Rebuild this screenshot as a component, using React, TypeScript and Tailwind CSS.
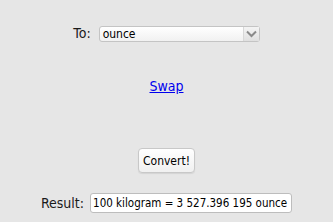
import React from "react";

export default function App() {
  return (
    <div className="w-[333px] h-[222px] bg-[#e6e6e6] flex flex-col items-center font-['DejaVu_Sans_Condensed','Open_Sans',sans-serif] text-[#1a1a1a] overflow-hidden">
      <div className="flex items-center gap-[8px] mt-[25px] h-[17px]">
        <span className="text-[14px] leading-[17px]">To:</span>
        <div className="w-[161px] h-[16px] flex items-stretch rounded-[3px] border border-[#c4c4c4] bg-gradient-to-b from-white to-[#f1f1f1]">
          <span className="flex-1 text-[12px] leading-[14px] pl-[3px] text-black">ounce</span>
          <div className="w-[16px] border-l border-[#d8d8d8] flex items-center justify-center bg-gradient-to-b from-[#f4f4f4] to-[#e0e0e0]">
            <svg width="11" height="8" viewBox="0 0 11 8">
              <path d="M1 1.5 L5.5 6 L10 1.5" fill="none" stroke="#8a8a8a" strokeWidth="2" />
            </svg>
          </div>
        </div>
      </div>
      <a href="#" className="mt-[36px] text-[14px] leading-[17px] text-[#0000ee] underline">Swap</a>
      <button className="mt-[53px] h-[25px] px-[4px] rounded-[4px] border border-[#c8c8c8] bg-gradient-to-b from-white to-[#f0f0f0] text-[12px] leading-[14px] text-black shadow-[0_1px_1px_rgba(0,0,0,0.08)]">
        Convert!
      </button>
      <div className="flex items-center gap-[6px] mt-[20px]">
        <span className="text-[14px] leading-[17px]">Result:</span>
        <div className="w-[202px] h-[20px] rounded-[3px] border border-[#bdbdbd] bg-white flex items-center pl-[2px] text-[11.5px] leading-[14px] text-black whitespace-nowrap overflow-hidden">
          100 kilogram = 3 527.396 195 ounce
        </div>
      </div>
    </div>
  );
}
